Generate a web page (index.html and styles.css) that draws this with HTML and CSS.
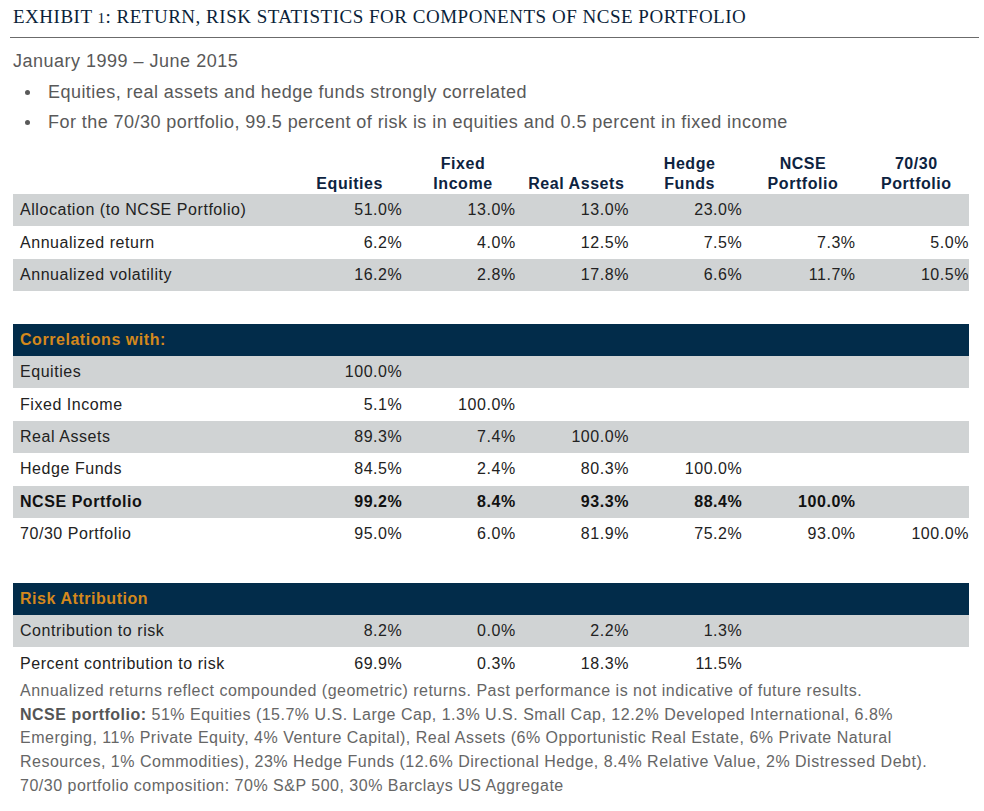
FILE: index.html
```html
<!DOCTYPE html>
<html>
<head>
<meta charset="utf-8">
<link rel="stylesheet" href="styles.css">
</head>
<body>
<div class="page">
  <h1 class="title">EXHIBIT <span class="osf">1</span>: RETURN, RISK STATISTICS FOR COMPONENTS OF NCSE PORTFOLIO</h1>
  <div class="rule"></div>
  <p class="period">January 1999 – June 2015</p>
  <ul class="bullets">
    <li>Equities, real assets and hedge funds strongly correlated</li>
    <li>For the 70/30 portfolio, 99.5 percent of risk is in equities and 0.5 percent in fixed income</li>
  </ul>
  <table class="data">
    <colgroup>
      <col class="c-label"><col class="c-num"><col class="c-num"><col class="c-num"><col class="c-num"><col class="c-num"><col class="c-num">
    </colgroup>
    <thead>
      <tr class="head">
        <th></th>
        <th>Equities</th>
        <th>Fixed<br>Income</th>
        <th>Real Assets</th>
        <th>Hedge<br>Funds</th>
        <th>NCSE<br>Portfolio</th>
        <th>70/30<br>Portfolio</th>
      </tr>
    </thead>
    <tbody>
      <tr class="shade"><td class="lbl">Allocation (to NCSE Portfolio)</td><td>51.0%</td><td>13.0%</td><td>13.0%</td><td>23.0%</td><td></td><td></td></tr>
      <tr><td class="lbl">Annualized return</td><td>6.2%</td><td>4.0%</td><td>12.5%</td><td>7.5%</td><td>7.3%</td><td>5.0%</td></tr>
      <tr class="shade"><td class="lbl">Annualized volatility</td><td>16.2%</td><td>2.8%</td><td>17.8%</td><td>6.6%</td><td>11.7%</td><td>10.5%</td></tr>
      <tr class="spacer"><td colspan="7"></td></tr>
      <tr class="band"><td class="lbl" colspan="7">Correlations with:</td></tr>
      <tr class="shade"><td class="lbl">Equities</td><td>100.0%</td><td></td><td></td><td></td><td></td><td></td></tr>
      <tr><td class="lbl">Fixed Income</td><td>5.1%</td><td>100.0%</td><td></td><td></td><td></td><td></td></tr>
      <tr class="shade"><td class="lbl">Real Assets</td><td>89.3%</td><td>7.4%</td><td>100.0%</td><td></td><td></td><td></td></tr>
      <tr><td class="lbl">Hedge Funds</td><td>84.5%</td><td>2.4%</td><td>80.3%</td><td>100.0%</td><td></td><td></td></tr>
      <tr class="shade strong"><td class="lbl">NCSE Portfolio</td><td>99.2%</td><td>8.4%</td><td>93.3%</td><td>88.4%</td><td>100.0%</td><td></td></tr>
      <tr><td class="lbl">70/30 Portfolio</td><td>95.0%</td><td>6.0%</td><td>81.9%</td><td>75.2%</td><td>93.0%</td><td>100.0%</td></tr>
      <tr class="spacer"><td colspan="7"></td></tr>
      <tr class="band"><td class="lbl" colspan="7">Risk Attribution</td></tr>
      <tr class="shade"><td class="lbl">Contribution to risk</td><td>8.2%</td><td>0.0%</td><td>2.2%</td><td>1.3%</td><td></td><td></td></tr>
      <tr><td class="lbl">Percent contribution to risk</td><td>69.9%</td><td>0.3%</td><td>18.3%</td><td>11.5%</td><td></td><td></td></tr>
    </tbody>
  </table>
  <div class="notes">
    <p>Annualized returns reflect compounded (geometric) returns. Past performance is not indicative of future results.</p>
    <p><b>NCSE portfolio:</b> 51% Equities (15.7% U.S. Large Cap, 1.3% U.S. Small Cap, 12.2% Developed International, 6.8% Emerging, 11% Private Equity, 4% Venture Capital), Real Assets (6% Opportunistic Real Estate, 6% Private Natural Resources, 1% Commodities), 23% Hedge Funds (12.6% Directional Hedge, 8.4% Relative Value, 2% Distressed Debt).</p>
    <p>70/30 portfolio composition: 70% S&amp;P 500, 30% Barclays US Aggregate</p>
  </div>
</div>
</body>
</html>
```

FILE: styles.css
```css
html, body {
  margin: 0;
  padding: 0;
  background: #ffffff;
}

.page {
  width: 984px;
  font-family: "Liberation Sans", Arial, sans-serif;
  color: #222222;
}

.title {
  margin: 0;
  padding: 6px 0 0 13px;
  height: 25px;
  font-family: "Liberation Serif", "Times New Roman", serif;
  font-weight: normal;
  font-size: 19px;
  line-height: 22px;
  color: #0b1f3a;
  letter-spacing: 0.51px;
  white-space: nowrap;
}

.osf {
  font-size: 15px;
}

.rule {
  margin: 6px 5px 0 10px;
  height: 1px;
  background: #6b6b6b;
}

.period {
  margin: 12px 0 0 13px;
  font-size: 18px;
  line-height: 22px;
  letter-spacing: 0.5px;
  color: #595959;
}

.bullets {
  margin: 5px 0 0 0;
  padding: 0 0 0 48px;
  list-style: none;
  font-size: 18px;
  line-height: 30px;
  letter-spacing: 0.45px;
  color: #595959;
}

.bullets li {
  position: relative;
}

.bullets li::before {
  content: "";
  position: absolute;
  left: -23px;
  top: 13px;
  width: 5px;
  height: 5px;
  border-radius: 50%;
  background: #595959;
}

.data {
  margin: 17px 0 0 13px;
  width: 956px;
  border-collapse: collapse;
  table-layout: fixed;
  font-size: 16px;
  letter-spacing: 0.55px;
}

.c-label { width: 276px; }
.c-num { width: 113.33px; }

.head th {
  vertical-align: bottom;
  text-align: center;
  font-weight: bold;
  font-size: 16px;
  line-height: 20px;
  color: #0d2340;
  padding: 0 0 0 8px;
}

.data td {
  height: 32.4px;
  padding: 0;
  text-align: right;
  vertical-align: middle;
  color: #222222;
  line-height: 18px;
}

.data td.lbl {
  text-align: left;
  padding-left: 7px;
}

.shade td {
  background: #d0d3d4;
}

.strong td {
  font-weight: bold;
  color: #111111;
}

.band td {
  background: #022c4a;
  color: #d4881c;
  font-weight: bold;
}

.notes {
  margin: -1px 0 0 20px;
  font-size: 16px;
  line-height: 23.7px;
  letter-spacing: 0.5px;
  color: #666666;
  width: 940px;
}

.notes p {
  margin: 0;
}

.notes b {
  color: #555555;
}
```
